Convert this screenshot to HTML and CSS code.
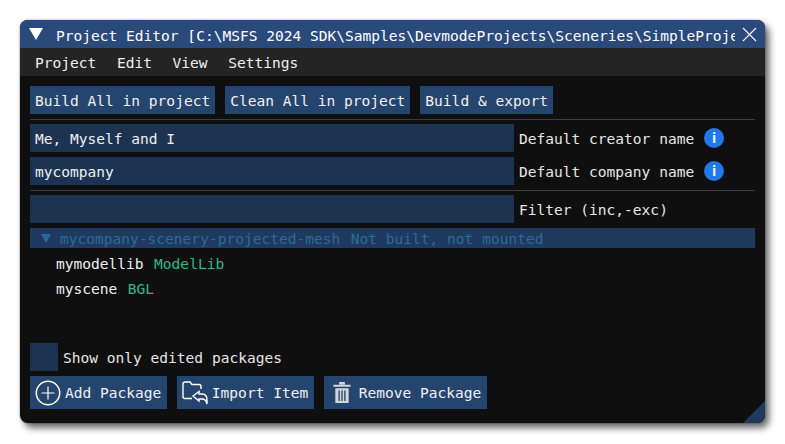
FILE: index.html
```html
<!DOCTYPE html>
<html lang="en">
<head>
<meta charset="utf-8">
<title>Project Editor</title>
<link rel="stylesheet" href="styles.css">
</head>
<body>
<div class="window">
  <header class="titlebar">
    <svg class="collapse" width="14" height="12" viewBox="0 0 14 12"><path d="M0 0H14L7 12Z" fill="#fff"/></svg>
    <div class="title">Project Editor [C:\MSFS 2024 SDK\Samples\DevmodeProjects\Sceneries\SimpleProject]</div>
    <svg class="close" width="15" height="15" viewBox="0 0 15 15"><path d="M1 1L14 14M14 1L1 14" stroke="#fff" stroke-width="1.1" fill="none"/></svg>
  </header>
  <nav class="menubar">
    <span>Project</span><span>Edit</span><span>View</span><span>Settings</span>
  </nav>
  <main class="content">
    <div class="row actions">
      <button class="btn">Build All in project</button>
      <button class="btn">Clean All in project</button>
      <button class="btn">Build &amp; export</button>
    </div>
    <hr class="sep">
    <div class="row field">
      <div class="input">Me, Myself and I</div>
      <span class="label">Default creator name</span>
      <span class="info">i</span>
    </div>
    <div class="row field second">
      <div class="input">mycompany</div>
      <span class="label">Default company name</span>
      <span class="info">i</span>
    </div>
    <hr class="sep">
    <div class="row field">
      <div class="input"></div>
      <span class="label">Filter (inc,-exc)</span>
    </div>
    <div class="tree-head">
      <svg class="arrow" width="10" height="9" viewBox="0 0 10 9"><path d="M0 0H10L5 9Z" fill="#2a6a9c"/></svg>
      <span class="tree-name">mycompany-scenery-projected-mesh</span>
      <span class="tree-state">Not built, not mounted</span>
    </div>
    <div class="tree-item first">mymodellib<span class="tag">ModelLib</span></div>
    <div class="tree-item">myscene<span class="tag">BGL</span></div>
    <div class="spacer"></div>
    <div class="row check">
      <span class="box"></span>
      <span class="label">Show only edited packages</span>
    </div>
    <div class="row tools">
      <button class="btn tool">
        <svg width="26" height="26" viewBox="0 0 26 26"><circle cx="13" cy="13" r="11.7" fill="none" stroke="#fff" stroke-width="1.5"/><path d="M13 6.500V19.500M6.500 13H19.500" stroke="#fff" stroke-width="1.2"/></svg>
        Add Package
      </button>
      <button class="btn tool">
        <svg width="26" height="24" viewBox="0 0 26 24"><path d="M10 17.500H3Q1 17.500 1 15.500V3Q1 1 3 1H8L10 3.500H17Q19 3.500 19 5.500V8" fill="none" stroke="#fff" stroke-width="1.4"/><path d="M11 15L17 10.500V13H20Q25 13 25 19V23Q24 18 20 18H17V20Z" fill="none" stroke="#fff" stroke-width="1.4"/></svg>
        Import Item
      </button>
      <button class="btn tool remove">
        <svg width="18" height="21" viewBox="0 0 18 22"><path d="M0 3H18V5H0ZM6 0H12V2.500H6ZM2 6.500H16V22H2Z" fill="#d4d4d4"/><path d="M6 9V20M9 9V20M12 9V20" stroke="#24466e" stroke-width="1.400"/></svg>
        Remove Package
      </button>
    </div>
  </main>
  <div class="grip"></div>
</div>
</body>
</html>
```

FILE: styles.css
```css
* { box-sizing: border-box; }
html, body { margin: 0; height: 100%; background: #fff; }
body {
  padding: 20px;
  font-family: "DejaVu Sans Mono", "Liberation Mono", monospace;
  font-size: 14.55px;
  color: #e6e6e6;
  overflow: hidden;
}
.window {
  position: relative;
  width: 745px;
  height: 403px;
  background: #0f0f0f;
  border-radius: 8px;
  overflow: hidden;
  display: flex;
  flex-direction: column;
  box-shadow: 0 0 2px rgba(0, 0, 0, .45), 4px 5px 7px rgba(0, 0, 0, .6);
}
.titlebar {
  height: 28px;
  flex: none;
  background: #294a7a;
  display: flex;
  align-items: center;
  padding: 0 8px 0 9px;
  color: #fff;
}
.collapse { flex: none; margin-right: 13px; }
.title { flex: 1; min-width: 0; white-space: nowrap; overflow: hidden; padding-top: 2px; }
.close { flex: none; margin-left: 7px; }
.menubar {
  height: 28px;
  flex: none;
  background: #242424;
  display: flex;
  align-items: center;
  gap: 20.600px;
  padding: 1px 0 0 15px;
  color: #f0f0f0;
}
.content {
  flex: 1;
  min-height: 0;
  display: flex;
  flex-direction: column;
  padding: 10px 10px 14px;
}
.row { display: flex; align-items: center; }
.actions { gap: 10px; }
.btn {
  font: inherit;
  color: #f0f0f0;
  background: #24466e;
  border: 0;
  margin: 0;
  padding: 1px 5px 0;
  height: 28px;
  white-space: nowrap;
}
.sep { width: 100%; border: 0; height: 1px; background: #3c3c42; margin: 5px 0 4px; flex: none; }
.input {
  width: 484px;
  height: 28px;
  background: #1c3452;
  padding: 0 5px;
  line-height: 29px;
  color: #f0f0f0;
  flex: none;
}
.label { padding-top: 1px; }
.field .label { margin-left: 5px; }
.field .label + .info { margin-left: 10px; }
.second { margin-top: 5px; }
.info {
  width: 20px;
  height: 20px;
  border-radius: 50%;
  background: #1f78f0;
  color: #fff;
  font: bold 14px/20px "Roboto", sans-serif;
  text-align: center;
}
.tree-head {
  margin-top: 5px;
  height: 20px;
  background: #1f3a5c;
  color: #2a6a9c;
  display: flex;
  align-items: center;
  padding-left: 11px;
  flex: none;
  white-space: nowrap;
}
.tree-name { padding-top: 1px; }
.tree-state { padding-top: 1px; margin-left: 10.500px; }
.arrow { margin-right: 9px; flex: none; }
.tree-item { height: 25px; line-height: 26px; padding-left: 26px; color: #f0f0f0; flex: none; }
.tree-item.first { margin-top: 3px; }
.tag { color: #2abb85; margin-left: 10.500px; }
.spacer { flex: 1; }
.check { height: 28px; flex: none; }
.box { width: 28px; height: 28px; background: #1c3452; margin-right: 5px; flex: none; }
.tools { gap: 10px; margin-top: 5px; flex: none; }
.tool {
  height: 33px;
  display: flex;
  align-items: center;
  gap: 4px;
  padding: 0 5.500px 0 5px;
}
.tool.remove { gap: 8px; padding-left: 9px; }
.grip {
  position: absolute;
  right: 0;
  bottom: 0;
  width: 22px;
  height: 22px;
  background: #1f3a5c;
  clip-path: polygon(100% 0, 100% 100%, 0 100%);
}
```
